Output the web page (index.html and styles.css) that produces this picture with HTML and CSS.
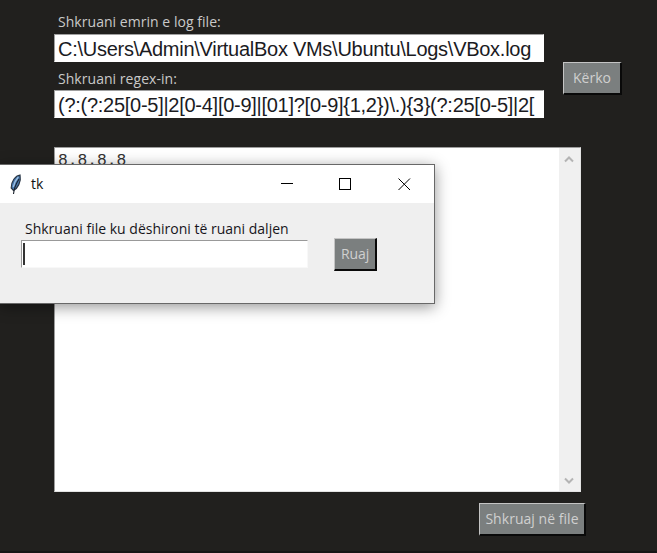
FILE: index.html
```html
<!DOCTYPE html>
<html lang="sq">
<head>
<meta charset="utf-8">
<title>tk</title>
<link rel="stylesheet" href="styles.css">
</head>
<body>
<main class="app">
  <section class="search">
    <div class="fields">
      <div class="label log-label"><span>Shkruani emrin e log file:</span></div>
      <div class="entry path"><span>C:\Users\Admin\VirtualBox VMs\Ubuntu\Logs\VBox.log</span></div>
      <div class="label regex-label"><span>Shkruani regex-in:</span></div>
      <div class="entry regex"><span>(?:(?:25[0-5]|2[0-4][0-9]|[01]?[0-9]{1,2})\.){3}(?:25[0-5]|2[</span></div>
    </div>
    <button class="btn find"><span>Kërko</span></button>
  </section>
  <section class="output">
    <div class="text">8.8.8.8</div>
    <div class="scrollbar">
      <svg width="10" height="8" viewBox="0 0 10 8"><path d="M1 6.5 5 2.5 9 6.5"/></svg>
      <svg width="10" height="8" viewBox="0 0 10 8"><path d="M1 1.5 5 5.5 9 1.5"/></svg>
    </div>
  </section>
  <button class="btn write"><span>Shkruaj në file</span></button>
</main>
<div class="dialog">
  <header class="titlebar">
    <svg class="feather" width="14" height="21" viewBox="0 0 14 21">
      <path d="M11 1C6.500 1.500 2 7.500 2.200 14L4.500 16.500C8.500 14.500 12.500 8 11 1Z" fill="#4678b0" stroke="#2b3644" stroke-width="1.2"/>
      <path d="M9.300 3C7 5.500 5 9.500 4.300 13" fill="none" stroke="#9fc0e0" stroke-width="1.300"/>
      <path d="M10 5C7.500 9 5 14 4.500 20" fill="none" stroke="#1b222c" stroke-width="1.1"/>
    </svg>
    <span class="title">tk</span>
    <svg class="controls" width="131" height="14" viewBox="0 0 131 14" fill="none" stroke="#000" stroke-width="1">
      <path d="M0 6.5H12M58.5 1.5H69.5V12.5H58.5Z" shape-rendering="crispEdges"/>
      <path d="M117.5 1.5 129 13M129 1.5 117.5 13"/>
    </svg>
  </header>
  <div class="dialog-body">
    <div class="save-field">
      <div class="label save-label"><span>Shkruani file ku dëshironi të ruani daljen</span></div>
      <div class="save-entry"><i class="caret"></i></div>
    </div>
    <button class="btn save"><span>Ruaj</span></button>
  </div>
</div>
</body>
</html>
```

FILE: styles.css
```css
* { box-sizing: border-box; }
body {
  margin: 0;
  width: 657px;
  height: 553px;
  overflow: hidden;
  background: #21201e;
  font: 14px/18px "Open Sans", "Noto Sans", sans-serif;
}
.app {
  height: 553px;
  padding: 13px 0 0 54px;
  border-bottom: 2px solid #171616;
}
.search { display: flex; height: 134px; }
.fields { width: 490px; }
.label { padding-left: 4px; white-space: nowrap; color: #c9c9c9; letter-spacing: 0.04px; }
.log-label { height: 21px; }
.regex-label { height: 28px; padding-top: 8px; }
.entry {
  height: 28px;
  padding-left: 3px;
  overflow: hidden;
  border: 1px solid #fff;
  border-top: 1px solid #a0a0a0;
  border-left: 1px solid #a0a0a0;
  background: #fff;
  color: #1b1b1f;
  font: 20px/28px "Liberation Sans", Arial, sans-serif;
  letter-spacing: -0.27px;
  white-space: nowrap;
}
.btn {
  display: block;
  flex: none;
  padding: 0;
  border: solid;
  border-width: 1px 2px 2px 1px;
  border-color: #c4c4c4 #090909 #090909 #c4c4c4;
  background: #7b7f7f;
  color: #d0d0d0;
  font: 14px/18px "Open Sans", "Noto Sans", sans-serif;
  letter-spacing: 0.04px;
  white-space: nowrap;
}
.find { width: 59px; height: 33px; margin: 49px 0 0 19px; }
.output {
  display: flex;
  width: 527px;
  height: 345px;
  border: 1px solid #e3e3e3;
  border-top-color: #9d9d9d;
  border-left-color: #9d9d9d;
  background: #fff;
}
.text {
  flex: 1;
  padding: 4px 0 0 3px;
  color: #333;
  font: 16.3px/18px "Liberation Mono", monospace;
}
.scrollbar {
  display: flex;
  flex-direction: column;
  justify-content: space-between;
  align-items: center;
  width: 21px;
  padding: 7px 2px 6px 0;
  background: #f0f0f0;
}
.scrollbar path { fill: none; stroke: #b4b4b4; stroke-width: 2; }
.write { width: 107px; height: 33px; margin: 11px 0 0 425px; }
.dialog {
  position: absolute;
  left: 0;
  top: 164px;
  width: 435px;
  height: 140px;
  border: 1px solid #686868;
  border-left: 0;
  background: #efefef;
  box-shadow: 0 3px 14px rgba(0, 0, 0, .42);
}
.titlebar {
  display: flex;
  align-items: center;
  height: 38px;
  padding: 0 22px 0 9px;
  background: #fff;
}
.title { margin-left: 8px; color: #111; }
.controls { margin-left: auto; }
.dialog-body { display: flex; padding-left: 21px; }
.save-field { width: 287px; }
.save-label { height: 37px; padding: 17px 0 0 4px; color: #17151b; letter-spacing: 0; }
.save-entry {
  height: 28px;
  padding: 2px 0 0 1px;
  border: solid #f8f8f8;
  border-width: 1px;
  border-top-color: #999;
  border-left-color: #999;
  background: #fff;
}
.caret { display: block; width: 2px; height: 22px; background: #333; }
.save {
  width: 43px;
  height: 33px;
  margin: 35px 0 0 26px;
  letter-spacing: -0.1px;
}
```
